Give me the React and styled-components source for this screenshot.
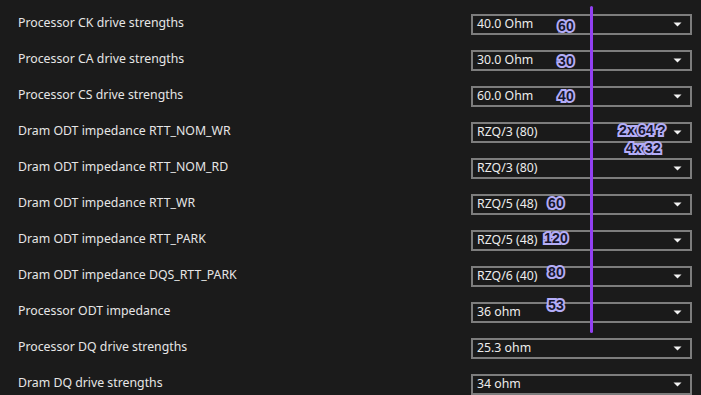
import React from "react";
import styled, { createGlobalStyle } from "styled-components";

const rows = [
  { label: "Processor CK drive strengths", value: "40.0 Ohm" },
  { label: "Processor CA drive strengths", value: "30.0 Ohm" },
  { label: "Processor CS drive strengths", value: "60.0 Ohm" },
  { label: "Dram ODT impedance RTT_NOM_WR", value: "RZQ/3 (80)" },
  { label: "Dram ODT impedance RTT_NOM_RD", value: "RZQ/3 (80)" },
  { label: "Dram ODT impedance RTT_WR", value: "RZQ/5 (48)" },
  { label: "Dram ODT impedance RTT_PARK", value: "RZQ/5 (48)" },
  { label: "Dram ODT impedance DQS_RTT_PARK", value: "RZQ/6 (40)" },
  { label: "Processor ODT impedance", value: "36 ohm" },
  { label: "Processor DQ drive strengths", value: "25.3 ohm" },
  { label: "Dram DQ drive strengths", value: "34 ohm" },
];

// hand-written notes drawn on top of the screenshot
const notes = [
  { text: "60", x: 558, y: 18 },
  { text: "30", x: 558, y: 53 },
  { text: "40", x: 558, y: 88 },
  { text: "2x 64 ?", x: 619, y: 122 },
  { text: "4x 32", x: 626, y: 140 },
  { text: "60", x: 548, y: 195 },
  { text: "120", x: 544, y: 230 },
  { text: "80", x: 548, y: 264 },
  { text: "53", x: 548, y: 297 },
];

const GlobalStyle = createGlobalStyle`
  html, body {
    margin: 0;
    padding: 0;
    background: #1b1b1b;
  }
  body {
    width: 701px;
    height: 395px;
    overflow: hidden;
  }
`;

function Caret() {
  return (
    <svg width="9" height="5" viewBox="0 0 9 5">
      <path d="M0.5 0.5 H8.5 L4.5 4.5 Z" fill="#f2f2f2" />
    </svg>
  );
}

function SettingRow({ label, value }) {
  return (
    <Row>
      <Label>{label}</Label>
      <Select>
        <span>{value}</span>
        <Caret />
      </Select>
    </Row>
  );
}

export default function App() {
  return (
    <Page>
      <GlobalStyle />
      <List>
        {rows.map((r) => (
          <SettingRow key={r.label} label={r.label} value={r.value} />
        ))}
      </List>
      <Marker />
      {notes.map((n, i) => (
        <Note key={i} style={{ left: n.x, top: n.y }}>
          {n.text}
        </Note>
      ))}
    </Page>
  );
}

const Page = styled.div`
  position: relative;
  width: 701px;
  height: 395px;
  background: #1b1b1b;
  overflow: hidden;
  font-family: "Noto Sans", "Open Sans", sans-serif;
`;

const List = styled.div`
  display: flex;
  flex-direction: column;
  padding-top: 6px;
`;

const Row = styled.div`
  display: flex;
  align-items: center;
  justify-content: space-between;
  height: 36px;
  padding: 0 9px 0 18px;
`;

const Label = styled.div`
  color: #e6e6e6;
  font-size: 12.3px;
  margin-bottom: 3px;
`;

const Select = styled.div`
  box-sizing: border-box;
  width: 221px;
  height: 21px;
  border: 2px solid #7d7d7d;
  background: #1a1a1a;
  display: flex;
  align-items: center;
  justify-content: space-between;
  padding: 0 8px 0 4px;
  color: #ededed;
  font-size: 12.3px;
  span {
    margin-top: -1px;
  }
`;

const Marker = styled.div`
  position: absolute;
  left: 590px;
  top: 6px;
  width: 3px;
  height: 327px;
  border-radius: 2px;
  background: #9240f2;
`;

const Note = styled.div`
  position: absolute;
  font-family: "Liberation Sans", Arial, sans-serif;
  font-weight: 700;
  font-size: 14px;
  line-height: 16px;
  letter-spacing: 0.2px;
  word-spacing: -1px;
  white-space: nowrap;
  color: #17162e;
  -webkit-text-stroke: 4px #b4adf7;
  paint-order: stroke fill;
`;
